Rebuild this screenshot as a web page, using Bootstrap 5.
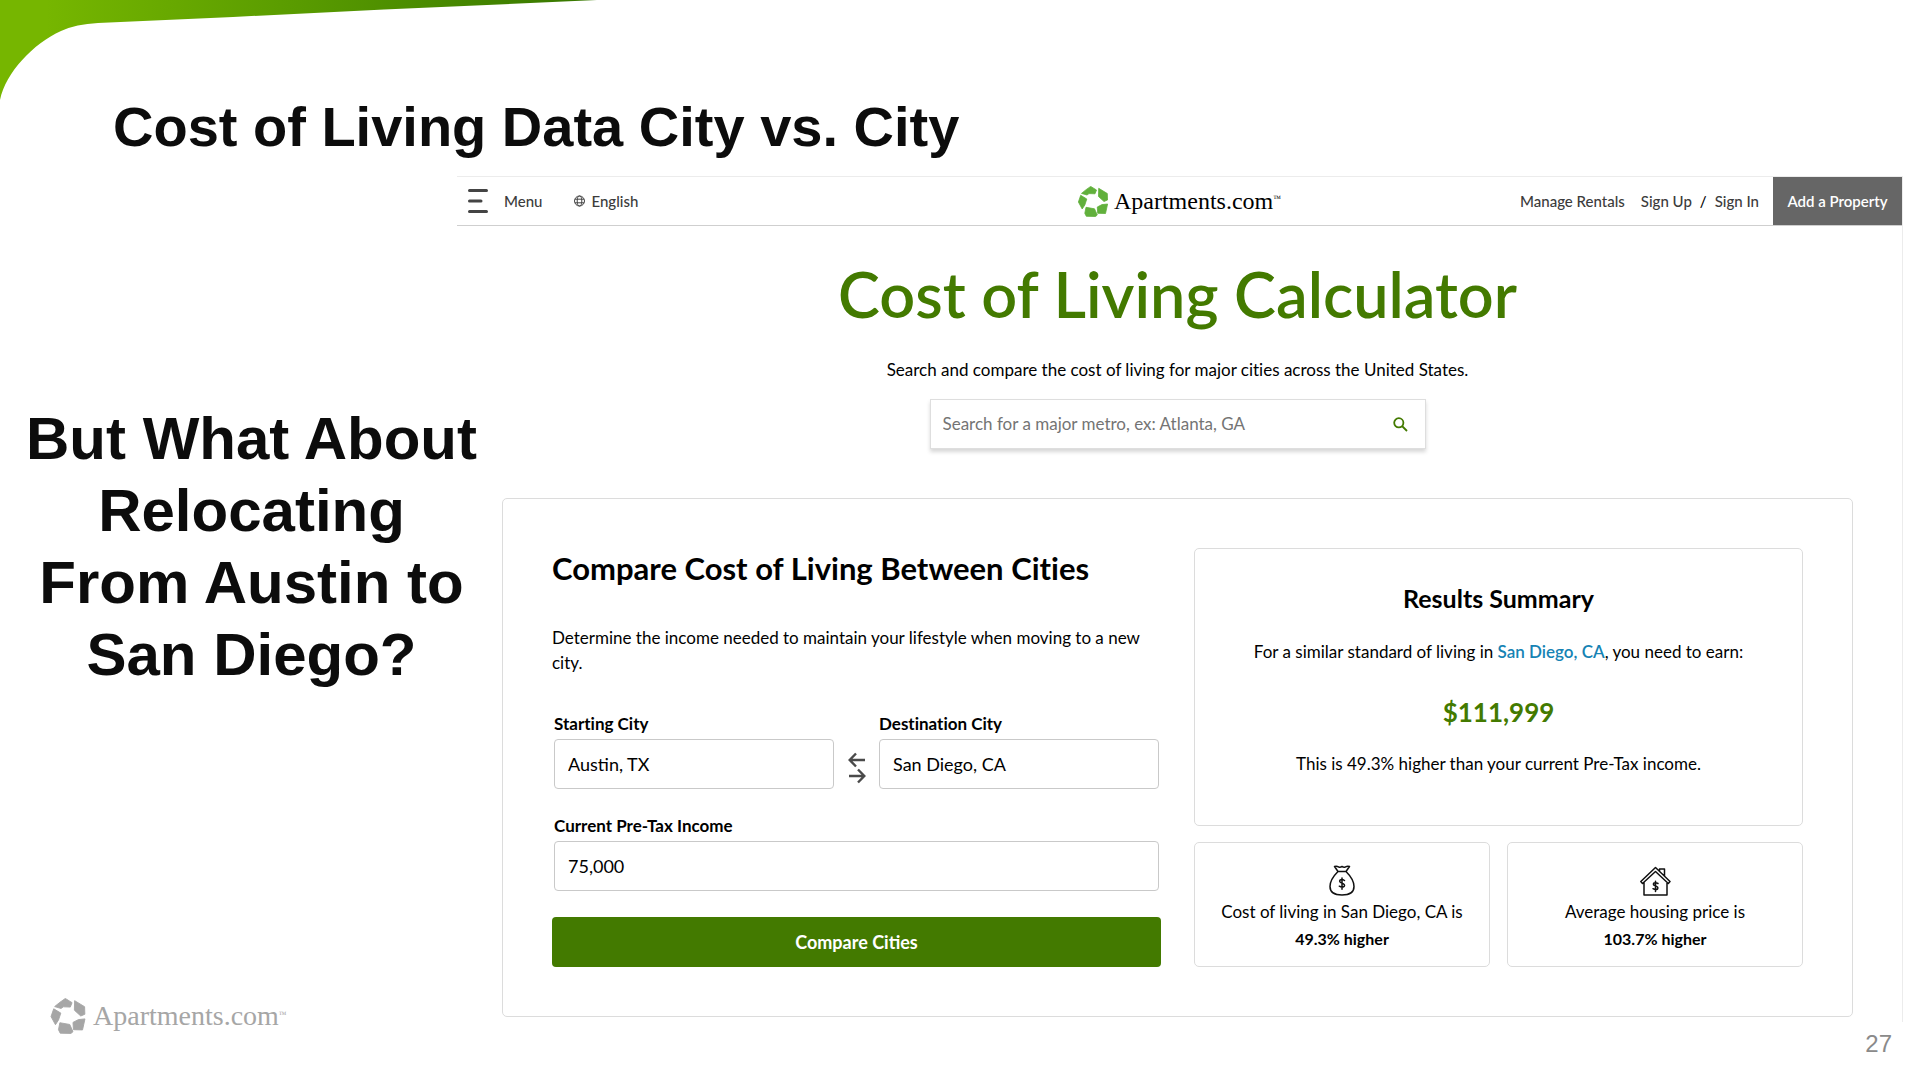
<!DOCTYPE html>
<html lang="en">
<head>
<meta charset="utf-8">
<meta name="viewport" content="width=device-width, initial-scale=1">
<title>Cost of Living Data City vs. City</title>
<link rel="stylesheet" href="https://cdn.jsdelivr.net/npm/bootstrap@5.3.0/dist/css/bootstrap.min.css">
<style>
  :root { --brand: #437a00; --rule: #dcdcdc; }
  body { font-family: Lato, "Open Sans", sans-serif; font-size: 17px; line-height: 24px; color: #000; background: #fff; font-variant-ligatures: none; }
  .corner-art { position: absolute; top: 0; left: 0; z-index: -1; }
  .slide-font { font-family: "Liberation Sans", Arial, sans-serif; color: #0c0c0c; font-weight: 700; }
  .slide-title { font-size: 56px; line-height: 64px; padding: 95px 113px 0; margin-bottom: 17px; }
  .slide-side { flex: 0 0 457px; }
  .slide-question { font-size: 60px; line-height: 72px; margin: 227px -46px 0 0; }
  .wordmark { font-family: "Liberation Serif", "Times New Roman", serif; line-height: 1; text-decoration: none; }
  .wordmark sup { font-size: 8px; top: -1em; }
  .site-bar .wordmark-top { font-size: 24px; color: #000; gap: 6px; }
  .wordmark-foot { font-size: 28px; color: #a6a6a6; gap: 7px; padding-left: 50px; margin-bottom: 46px; }
  .page-number { font-family: "Liberation Sans", Arial, sans-serif; font-size: 24px; line-height: 28px; color: #8a8a8a; padding: 8px 28px 0 0; }

  .site { border-top: 1px solid #ececec; border-right: 1px solid #ececec; margin-right: 17px; padding-bottom: 5px; }
  .site-bar { height: 49px; border-bottom: 1px solid #cfcfcf; font-size: 15px; font-weight: 500; }
  .site-bar a, .site-bar .bar-btn { color: #3c3c3c; text-decoration: none; }
  .bar-btn { border: 0; background: none; padding: 0; font-weight: 500; }
  .menu-btn { margin-left: 11px; }
  .lang { margin-left: 32px; gap: 6px; }
  .site-bar .add-property { background: #666; color: #fff; width: 129px; margin-left: 14px; font-weight: 600; }
  .hero { padding-right: 4px; }
  .hero-title { font-size: 63px; line-height: 72px; font-weight: 600; color: var(--brand); margin: 32px 0 28px; }
  .search-box { width: 496px; height: 50px; margin-top: 17px; border: 1px solid #dedede; box-shadow: 0 3px 4px rgba(0,0,0,.16); }
  .search-box input { border: 0; font-size: 17px; padding: 0 12px; color: #000; }
  .search-box input::placeholder { color: #747474; opacity: 1; }
  .search-box button { border: 0; background: none; padding: 0 17px 2px; color: var(--brand); }

  .panel { border: 1px solid var(--rule); border-radius: 5px; margin: 49px 49px 0 45px; padding: 49px; }
  .panel .row { --bs-gutter-x: 33px; }
  .panel h2 { font-size: 31px; line-height: 40px; font-weight: 700; margin-bottom: 37px; }
  .intro { line-height: 25px; margin-bottom: 39px; }
  .fields { padding: 0 2px; }
  .fields label { line-height: 20px; font-weight: 700; margin-bottom: 5px; }
  .fields .form-control { height: 50px; border: 1px solid #c9c9c9; border-radius: 4px; font-size: 18px; padding: 0 13px; color: #000; }
  .swap { width: 45px; height: 50px; border: 0; background: none; padding: 8px 0 0; }
  .income { margin-top: 27px; }
  .compare { height: 50px; margin-top: 26px; border: 0; border-radius: 4px; background: var(--brand); color: #fff; font-size: 18px; font-weight: 700; }
  .tile { border: 1px solid var(--rule); border-radius: 5px; text-align: center; }
  .summary { padding: 34px 16px 46px; }
  .summary h3 { font-size: 25px; line-height: 30px; font-weight: 700; margin-bottom: 27px; }
  .summary a { color: #1683b4; font-weight: 600; text-decoration: none; }
  .amount { font-size: 26px; line-height: 34px; font-weight: 700; color: var(--brand); margin: 31px 0 23px; }
  .tiles { gap: 17px; margin-top: 16px; }
  .stat { padding: 22px 8px 15px; }
  .stat svg { margin-bottom: 3px; }
  .stat strong { margin-top: 3px; font-size: 16px; }
</style>
<script src="https://cdn.jsdelivr.net/npm/bootstrap@5.3.0/dist/js/bootstrap.bundle.min.js"></script>
</head>
<body class="d-flex flex-column min-vh-100 position-relative">
<svg width="0" height="0" class="position-absolute" aria-hidden="true">
  <symbol id="mark-star" viewBox="0 0 30 31">
    <path stroke="currentColor" stroke-width=".8" stroke-linejoin="round" d="M12.7.4 18.5 4 17 7.8 11 7.6 9 9 3.500 7.400Q8 3.500 12.700.4ZM20.700 2.300 29.300 7.500 29.500 14 26 15.500 20.500 10.500ZM29.600 18 27.500 27.500 19.700 27.300 19.300 21 24 18.600ZM8 21.300 16.500 22.800 19.300 29 17.500 30.500 8.300 30.300 6.800 27.300ZM2.700 9.300 8.800 13 6.800 19 4.200 23 .4 16Z"/>
  </symbol>
</svg>
<svg class="corner-art" width="600" height="100" viewBox="0 0 600 100" aria-hidden="true">
  <defs><linearGradient id="leaf" gradientUnits="userSpaceOnUse" x1="0" y1="0" x2="580" y2="0"><stop offset=".08" stop-color="#76b600"/><stop offset=".5" stop-color="#5a9c00"/><stop offset="1" stop-color="#387800"/></linearGradient></defs>
  <path fill="url(#leaf)" d="M0 0H597L384 9.5 233 17 98 23Q76 24 61 31C33 44 6 72 0 100Z"/>
</svg>

<h1 class="slide-font slide-title">Cost of Living Data City vs. City</h1>

<div class="d-flex flex-grow-1">
  <aside class="slide-side d-flex flex-column">
    <h2 class="slide-font slide-question text-center">But What About<br>Relocating<br>From Austin to<br>San Diego?</h2>
    <div class="wordmark wordmark-foot d-flex align-items-center mt-auto">
      <svg width="36" height="36" fill="currentColor" aria-hidden="true"><use href="#mark-star"/></svg>
      <span>Apartments.com<sup>™</sup></span>
    </div>
  </aside>

  <div class="flex-grow-1">
    <main class="site">
      <header class="site-bar d-flex align-items-center">
        <div class="d-flex align-items-center col">
          <button type="button" class="bar-btn menu-btn d-flex align-items-center gap-3">
            <svg width="20" height="24" viewBox="0 0 20 24" stroke="#444" stroke-width="3" stroke-linecap="round" aria-hidden="true"><path d="M1.500 1.500H18.500M1.500 12H13M1.500 22.500H18.500"/></svg>Menu
          </button>
          <a href="#" class="lang d-flex align-items-center">
            <svg width="11" height="12" viewBox="0 0 11 12" fill="none" stroke="#444" aria-hidden="true"><circle cx="5.500" cy="6" r="5"/><ellipse cx="5.500" cy="6" rx="2.300" ry="5"/><path d="M1 4.200H10M1 7.800H10"/></svg>English
          </a>
        </div>
        <a href="#" class="wordmark wordmark-top d-flex align-items-center fw-normal">
          <svg width="30" height="31" fill="#61b03c" color="#61b03c" aria-hidden="true"><use href="#mark-star"/></svg>
          <span>Apartments.com<sup>™</sup></span>
        </a>
        <nav class="col d-flex align-items-center justify-content-end h-100">
          <a href="#" class="me-3">Manage Rentals</a>
          <a href="#">Sign Up</a><span class="px-2">/</span><a href="#">Sign In</a>
          <button type="button" class="bar-btn add-property h-100">Add a Property</button>
        </nav>
      </header>

      <section class="hero d-flex flex-column align-items-center text-center">
        <h2 class="hero-title">Cost of Living Calculator</h2>
        <p class="mb-0">Search and compare the cost of living for major cities across the United States.</p>
        <form class="search-box d-flex">
          <input type="search" class="flex-grow-1" aria-label="Search for a major metro" placeholder="Search for a major metro, ex: Atlanta, GA">
          <button type="button" aria-label="Search"><svg width="15" height="15" viewBox="0 0 15 15" fill="none" stroke="currentColor" stroke-width="1.800"><circle cx="5.800" cy="5.800" r="4.600"/><path d="M9 9 14 14"/></svg></button>
        </form>
      </section>

      <section class="panel">
        <div class="row">
          <form class="col-6">
            <h2>Compare Cost of Living Between Cities</h2>
            <p class="intro">Determine the income needed to maintain your lifestyle when moving to a new city.</p>
            <div class="fields">
              <div class="d-flex align-items-end">
                <div class="col"><label for="from" class="d-block">Starting City</label><input id="from" type="text" class="form-control" value="Austin, TX"></div>
                <button type="button" class="swap" aria-label="Swap cities"><svg width="18" height="32" viewBox="0 0 18 32" fill="none" stroke="#4a4a4a" stroke-width="2.400" aria-hidden="true"><path d="M17 8H2M8 1.500 1.700 8 8 14.500M1 24H16M10 17.500 16.300 24 10 30.500"/></svg></button>
                <div class="col"><label for="to" class="d-block">Destination City</label><input id="to" type="text" class="form-control" value="San Diego, CA"></div>
              </div>
              <div class="income"><label for="income" class="d-block">Current Pre-Tax Income</label><input id="income" type="text" class="form-control" value="75,000"></div>
            </div>
            <button type="button" class="compare w-100">Compare Cities</button>
          </form>

          <div class="col-6 d-flex flex-column">
            <div class="tile summary flex-grow-1">
              <h3>Results Summary</h3>
              <p class="mb-0">For a similar standard of living in <a href="#">San Diego, CA</a>, you need to earn:</p>
              <p class="amount">$111,999</p>
              <p class="mb-0">This is 49.3% higher than your current Pre-Tax income.</p>
            </div>
            <div class="tiles d-flex">
              <div class="tile stat col">
                <svg class="d-block mx-auto" width="32" height="32" viewBox="0 0 32 32" fill="none" stroke="#111" stroke-width="1.500" stroke-linejoin="round" stroke-linecap="round" aria-hidden="true"><path d="M12 6.500 8.500 1.500Q10.500.700 12.500 1.800 14 2.700 16 1.500 18 2.700 19.500 1.800 21.500.700 23.500 1.500L20 6.500ZM12 6.500C7.500 11 4 16 4 21.500 4 27 8.500 30 16 30S28 27 28 21.500C28 16 24.500 11 20 6.500"/><path d="M18.500 15.500Q16 13.800 14 15.200 12.800 17.200 16 18.200 19.500 19.300 18.200 21.400 16 23 13.300 21.200M16 13V24.200"/></svg>
                <span class="d-block">Cost of living in San Diego, CA is</span><strong class="d-block">49.3% higher</strong>
              </div>
              <div class="tile stat col">
                <svg class="d-block mx-auto" width="32" height="32" viewBox="0 0 32 32" fill="none" stroke="#111" stroke-width="1.500" stroke-linejoin="round" aria-hidden="true"><path d="M5 17V30H28V17M16.500 6.500 3.500 18.500 1.800 16.500 16.500 2.500 31 16.500 29.300 18.500ZM20.500 6V4H25.500V11.200"/><path stroke-linecap="round" d="M19 18.500Q16.500 17 14.700 18.200 13.600 20 16.500 20.900 19.700 22 18.600 24 16.500 25.300 14 23.700M16.500 16.300V26.500"/></svg>
                <span class="d-block">Average housing price is</span><strong class="d-block">103.7% higher</strong>
              </div>
            </div>
          </div>
        </div>
      </section>
    </main>
    <footer class="page-number text-end">27</footer>
  </div>
</div>
</body>
</html>
